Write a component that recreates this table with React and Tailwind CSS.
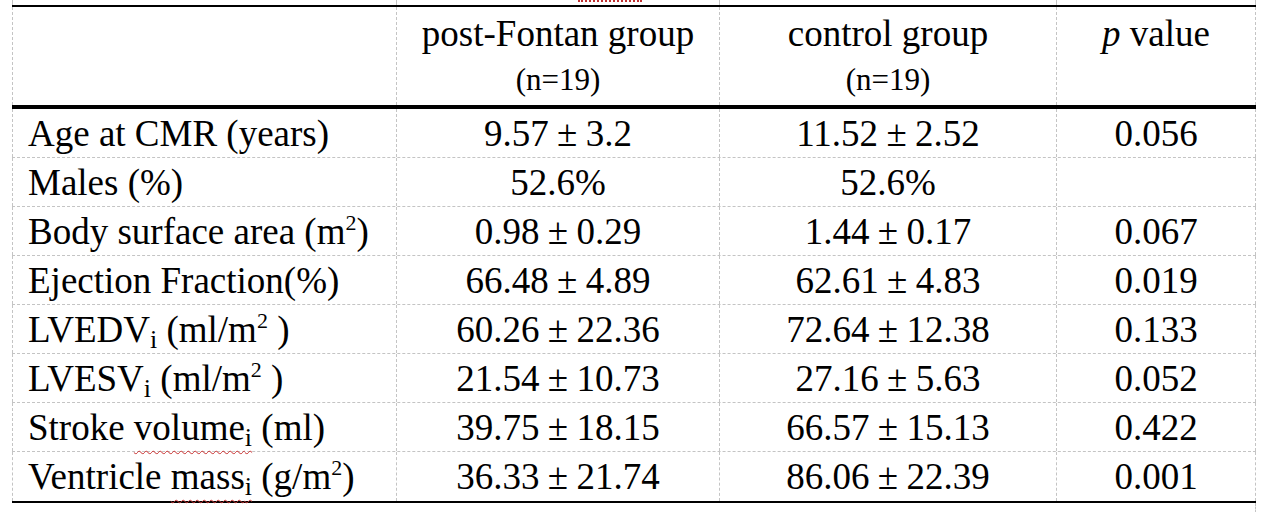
import React from 'react'

const widths = ['w-[384px]', 'w-[323px]', 'w-[337px]', 'w-[200px]']

function PlusMinus({ v }) {
  if (typeof v === 'string') return v
  return (
    <>
      {v[0]}
      <span className="inline-block w-[1em] text-center">±</span>
      {v[1]}
    </>
  )
}

const Sub = () => <sub className="text-[26px] leading-none -bottom-[6px]">i</sub>
const Sup = () => <sup className="text-[22px] leading-none -top-[14px]">2</sup>

const squiggle = 'underline decoration-wavy decoration-[#c83030] decoration-1 underline-offset-[10px]'

const rows = [
  { label: <>Age at CMR (years)</>, a: ['9.57', '3.2'], b: ['11.52', '2.52'], p: '0.056' },
  { label: <>Males (%)</>, a: '52.6%', b: '52.6%', p: '' },
  { label: <>Body surface area (m<Sup />)</>, a: ['0.98', '0.29'], b: ['1.44', '0.17'], p: '0.067' },
  { label: <>Ejection Fraction(%)</>, a: ['66.48', '4.89'], b: ['62.61', '4.83'], p: '0.019' },
  { label: <>LVEDV<Sub /> (ml/m<Sup /> )</>, a: ['60.26', '22.36'], b: ['72.64', '12.38'], p: '0.133' },
  { label: <>LVESV<Sub /> (ml/m<Sup /> )</>, a: ['21.54', '10.73'], b: ['27.16', '5.63'], p: '0.052' },
  {
    label: (
      <>
        Stroke <span className={squiggle}>volume<Sub /></span> (ml)
      </>
    ),
    a: ['39.75', '18.15'],
    b: ['66.57', '15.13'],
    p: '0.422'
  },
  {
    label: (
      <>
        Ventricle <span className={squiggle}>mass<Sub /></span> (g/m<Sup />)
      </>
    ),
    a: ['36.33', '21.74'],
    b: ['86.06', '22.39'],
    p: '0.001'
  }
]

function App() {
  return (
    <div className="w-[1266px] h-[512px] overflow-hidden bg-white text-black font-['Liberation_Serif','Times_New_Roman',serif]">
      <div className="ml-[12px] w-[1244px]">
        {/* cut-off caption strip */}
        <div className="flex h-[5px]">
          <div className={`${widths[0]} border-l border-dashed border-[#c4c4c4]`} />
          <div className={`${widths[1]} border-l border-dashed border-[#c4c4c4]`}>
            <div className="ml-[181px] w-[64px] border-t-2 border-dotted border-[#c03030]" />
          </div>
          <div className={`${widths[2]} border-l border-dashed border-[#c4c4c4]`} />
          <div className={`${widths[3]} border-x border-dashed border-[#c4c4c4]`} />
        </div>

        {/* header */}
        <div className="flex h-[104px] border-t-2 border-b-4 border-black">
          <div className={`${widths[0]} border-l border-dashed border-[#c4c4c4]`} />
          <div className={`${widths[1]} flex flex-col items-center border-l border-dashed border-[#c4c4c4] pt-[6px]`}>
            <div className="text-[37px] leading-[42px]">post-Fontan group</div>
            <div className="mt-[7px] text-[31px] leading-[36px]">(n=19)</div>
          </div>
          <div className={`${widths[2]} flex flex-col items-center border-l border-dashed border-[#c4c4c4] pt-[6px]`}>
            <div className="text-[37px] leading-[42px]">control group</div>
            <div className="mt-[7px] text-[31px] leading-[36px]">(n=19)</div>
          </div>
          <div className={`${widths[3]} flex flex-col items-center border-x border-dashed border-[#c4c4c4] pt-[6px]`}>
            <div className="text-[37px] leading-[42px]">
              <i>p</i> value
            </div>
          </div>
        </div>

        {/* data rows */}
        {rows.map((r, i) => {
          const last = i === rows.length - 1
          return (
            <div
              key={i}
              className={`flex text-[37px] leading-none ${last ? 'h-[51px] border-b-2 border-black' : 'h-[49px] border-b border-dashed border-[#c4c4c4]'}`}
            >
              <div className={`${widths[0]} flex items-center border-l border-dashed border-[#c4c4c4] pl-[15px] whitespace-nowrap`}>
                <span>{r.label}</span>
              </div>
              <div className={`${widths[1]} flex items-center justify-center border-l border-dashed border-[#c4c4c4]`}>
                <PlusMinus v={r.a} />
              </div>
              <div className={`${widths[2]} flex items-center justify-center border-l border-dashed border-[#c4c4c4]`}>
                <PlusMinus v={r.b} />
              </div>
              <div className={`${widths[3]} flex items-center justify-center border-x border-dashed border-[#c4c4c4]`}>
                {r.p}
              </div>
            </div>
          )
        })}

        {/* dashed edge below the table */}
        <div className="flex h-[10px]">
          <div className="w-[1244px] border-r border-dashed border-[#c4c4c4]" />
        </div>
      </div>
    </div>
  )
}

export default App
